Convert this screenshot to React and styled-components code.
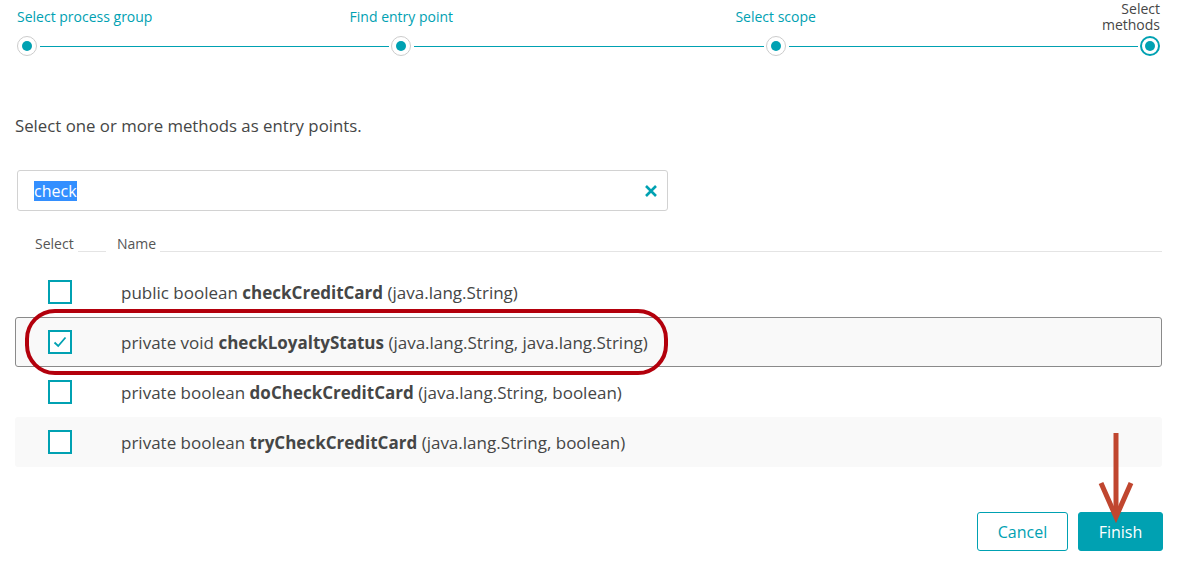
import React from "react";
import styled, { createGlobalStyle } from "styled-components";

const TEAL = "#00a1b2";
const TEXT = "#454646";

const Global = createGlobalStyle`
  html, body { margin: 0; padding: 0; background: #fff; }
  body { font-family: "Open Sans", "Lato", sans-serif; color: ${TEXT}; }
  * { box-sizing: border-box; }
`;

const Page = styled.div`
  width: 1178px;
  height: 575px;
  padding: 0 16px 0 15px;
  display: flex;
  flex-direction: column;
`;

const Stepper = styled.div`
  display: grid;
  grid-template-columns: 20px 1fr 20px 1fr 20px 1fr 20px;
  grid-template-rows: 34px 20px;
  row-gap: 2px;
  margin: 0 2px;
`;

const StepLabel = styled.div`
  grid-row: 1;
  grid-column: ${(p) => p.$col};
  justify-self: ${(p) => p.$align};
  align-self: center;
  width: max-content;
  font-size: 14px;
  line-height: 16px;
  color: ${(p) => (p.$current ? TEXT : TEAL)};
  text-align: ${(p) => (p.$align === "end" ? "right" : "left")};
`;

const LabelLine = styled.span`
  display: block;
  height: 16px;
`;

const Dot = styled.div`
  grid-row: 2;
  grid-column: ${(p) => p.$col};
  width: 20px;
  height: 20px;
  border-radius: 50%;
  border: ${(p) => (p.$current ? `2px solid ${TEAL}` : "1px solid #cccccc")};
  background: #fff;
  display: flex;
  align-items: center;
  justify-content: center;
  &::after {
    content: "";
    width: 10px;
    height: 10px;
    border-radius: 50%;
    background: ${TEAL};
  }
`;

const Track = styled.div`
  grid-row: 2;
  grid-column: ${(p) => p.$col};
  align-self: center;
  height: 1px;
  margin: 0 2px 0 3px;
  background: ${TEAL};
`;

const Intro = styled.p`
  margin: 60px 0 0;
  font-size: 16.8px;
  line-height: 20px;
`;

const Search = styled.div`
  margin: 34px 0 0 2px;
  width: 651px;
  height: 41px;
  border: 1px solid #d2d2d2;
  border-radius: 3px;
  display: flex;
  align-items: center;
  padding: 0 9px 0 16px;
  justify-content: space-between;
`;

const Selected = styled.span`
  background: #338fff;
  color: #fff;
  font-size: 16px;
  line-height: 20px;
`;

const ClearBtn = styled.span`
  display: flex;
  width: 14px;
  height: 14px;
`;

const Header = styled.div`
  margin-top: 24px;
  display: flex;
  height: 17px;
  gap: 11px;
`;

const HeadCell = styled.div`
  display: flex;
  align-items: flex-end;
  width: ${(p) => p.$w || "auto"};
  flex: ${(p) => (p.$grow ? 1 : "none")};
  padding-left: ${(p) => p.$pad || 0}px;
  font-size: 14px;
  line-height: 17px;
  color: #555;
  &::after {
    content: "";
    flex: 1;
    height: 1px;
    margin-left: 4px;
    background: #e4e4e4;
  }
`;

const Rows = styled.div`
  margin-top: 15px;
  display: flex;
  flex-direction: column;
`;

const Row = styled.div`
  position: relative;
  height: 50px;
  display: flex;
  align-items: center;
  padding-left: 32px;
  background: ${(p) => (p.$stripe ? "#f9f9f9" : "#fff")};
  border: 1px solid ${(p) => (p.$selected ? "#8a8a8a" : "transparent")};
  border-radius: 3px;
`;

const Box = styled.div`
  width: 24px;
  height: 24px;
  border: 2px solid ${TEAL};
  display: flex;
  align-items: center;
  justify-content: center;
  background: #fff;
  margin-top: -1px;
`;

const Method = styled.span`
  margin-left: 49px;
  font-size: 17px;
  color: ${TEXT};
  b { font-weight: 700; }
`;

const Highlight = styled.div`
  position: absolute;
  z-index: 2;
  left: 9px;
  top: -9px;
  width: 643px;
  height: 66px;
  border: 4px solid #b3000c;
  border-radius: 30px;
  pointer-events: none;
`;

const Footer = styled.div`
  margin-top: 45px;
  display: flex;
  justify-content: flex-end;
  gap: 10px;
  margin-right: -1px;
`;

const Button = styled.button`
  position: relative;
  height: 39px;
  width: ${(p) => (p.$primary ? 85 : 91)}px;
  padding: 0;
  border-radius: 3px;
  font-family: inherit;
  font-size: 16px;
  border: 1px solid ${TEAL};
  background: ${(p) => (p.$primary ? TEAL : "#fff")};
  color: ${(p) => (p.$primary ? "#fff" : TEAL)};
`;

const Arrow = styled.svg`
  position: absolute;
  left: 19px;
  top: -80px;
  overflow: visible;
`;

const methods = [
  { pre: "public boolean", name: "checkCreditCard", args: "(java.lang.String)" },
  { pre: "private void", name: "checkLoyaltyStatus", args: "(java.lang.String, java.lang.String)", checked: true },
  { pre: "private boolean", name: "doCheckCreditCard", args: "(java.lang.String, boolean)" },
  { pre: "private boolean", name: "tryCheckCreditCard", args: "(java.lang.String, boolean)" },
];

export default function App() {
  return (
    <Page>
      <Global />
      <Stepper>
        <StepLabel $col={1} $align="start">Select process group</StepLabel>
        <StepLabel $col={3} $align="center">Find entry point</StepLabel>
        <StepLabel $col={5} $align="center">Select scope</StepLabel>
        <StepLabel $col={7} $align="end" $current>
          <LabelLine>Select</LabelLine>
          <LabelLine>methods</LabelLine>
        </StepLabel>
        <Dot $col={1} />
        <Track $col={2} />
        <Dot $col={3} />
        <Track $col={4} />
        <Dot $col={5} />
        <Track $col={6} />
        <Dot $col={7} $current />
      </Stepper>

      <Intro>Select one or more methods as entry points.</Intro>

      <Search>
        <Selected>check</Selected>
        <ClearBtn>
          <svg width="14" height="14" viewBox="0 0 14 14">
            <path d="M2 2 L12 12 M12 2 L2 12" stroke={TEAL} strokeWidth="2.6" strokeLinecap="butt" />
          </svg>
        </ClearBtn>
      </Search>

      <Header>
        <HeadCell $w="91px" $pad={20}>Select</HeadCell>
        <HeadCell $grow>Name</HeadCell>
      </Header>

      <Rows>
        {methods.map((m, i) => (
          <Row key={m.name} $stripe={i % 2 === 1} $selected={m.checked}>
            <Box>
              {m.checked && (
                <svg width="16" height="16" viewBox="0 0 16 16">
                  <path d="M2.5 8.5 L6.2 12 L13.5 3.5" fill="none" stroke={TEAL} strokeWidth="1.8" />
                </svg>
              )}
            </Box>
            <Method>
              {m.pre} <b>{m.name}</b> {m.args}
            </Method>
            {m.checked && <Highlight />}
          </Row>
        ))}
      </Rows>

      <Footer>
        <Button>Cancel</Button>
        <Button $primary>
          Finish
          <Arrow width="36" height="88" viewBox="0 0 36 88">
            <path d="M18 0 L18 82" stroke="#c0462f" strokeWidth="5" />
            <path d="M3 50 L18 84 L33 50" fill="none" stroke="#c0462f" strokeWidth="5" />
          </Arrow>
        </Button>
      </Footer>
    </Page>
  );
}
